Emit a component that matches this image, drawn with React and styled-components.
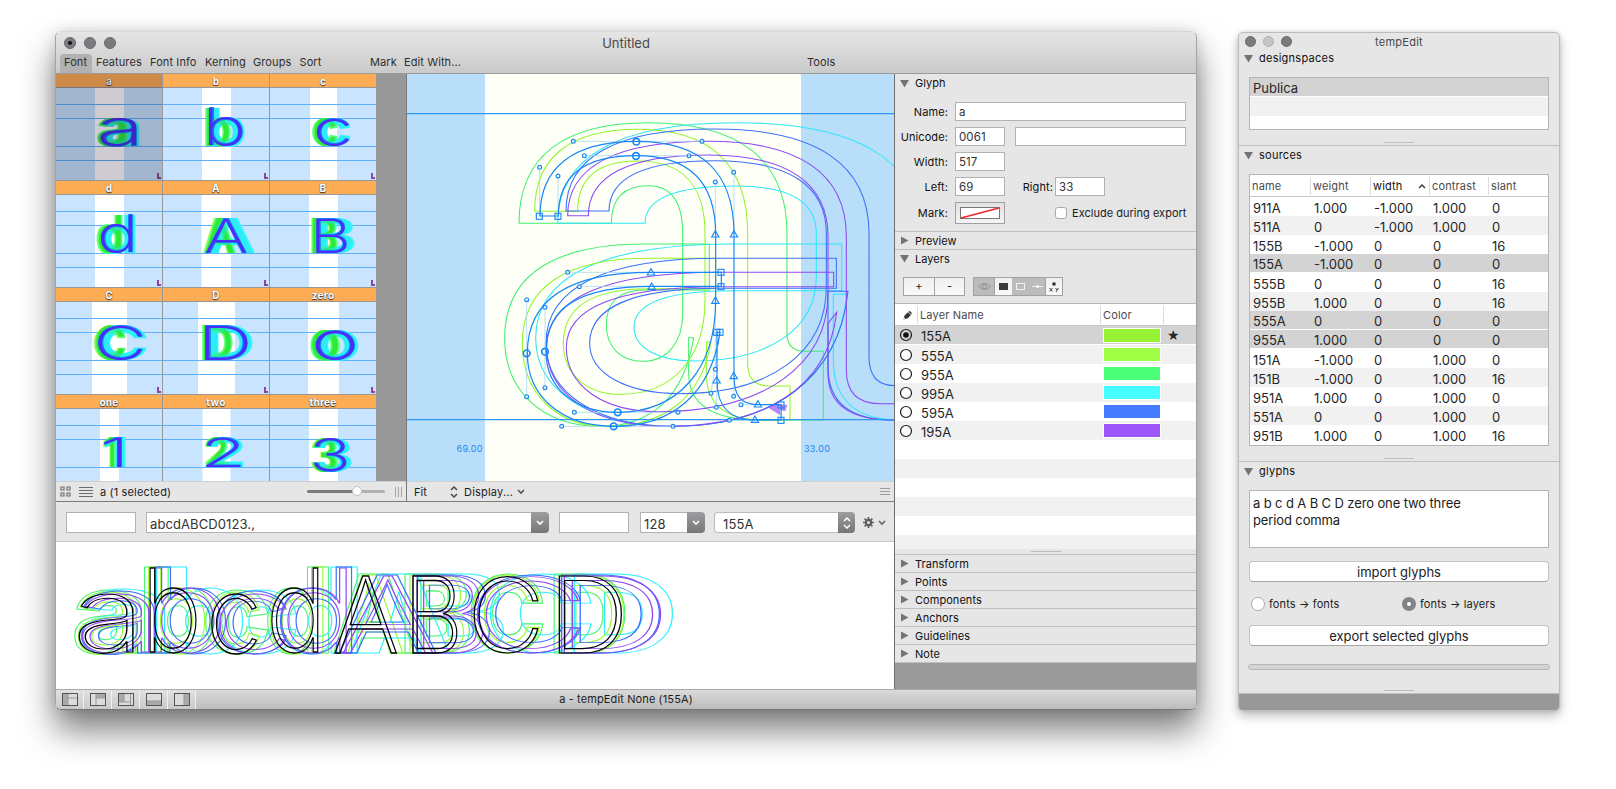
import React from "react";
import styled, { createGlobalStyle, css } from "styled-components";

const Global = createGlobalStyle`
  * { box-sizing: border-box; }
  body { margin: 0; background: #fff; overflow: hidden; }
`;

const Desktop = styled.main`
  position: relative;
  width: 1616px;
  height: 789px;
  overflow: hidden;
  background: #fff;
  color: #1c1c1c;
  font: 11px/14px Inter, "Liberation Sans", sans-serif;
  letter-spacing: 0.1px;
  white-space: nowrap;
  svg { display: block; flex: none; }
`;

/* ---------- windows ---------- */

const MainWindow = styled.section`
  position: absolute;
  left: 55px;
  top: 31px;
  width: 1142px;
  height: 679px;
  border: 1px solid #a3a3a3;
  border-top-color: #d8d8d8;
  border-bottom-color: #777;
  border-radius: 6px;
  box-shadow: 0 20px 34px rgba(0, 0, 0, 0.52), 0 0 14px rgba(0, 0, 0, 0.12);
  overflow: hidden;
  display: flex;
  flex-direction: column;
`;

const ToolWindow = styled.section`
  position: absolute;
  left: 1238px;
  top: 32px;
  width: 322px;
  height: 679px;
  border: 1px solid #bcbcbc;
  border-radius: 5px;
  box-shadow: 0 5px 11px rgba(0, 0, 0, 0.26), 0 0 4px rgba(0, 0, 0, 0.12);
  overflow: hidden;
  display: flex;
  flex-direction: column;
  background: #e6e6e6;
`;

const Header = styled.header`
  height: 42px;
  border-bottom: 1px solid #9b9b9b;
  background: linear-gradient(#e5e5e5, #cacaca);
  display: flex;
  flex-direction: column;
`;

const TitleRow = styled.div`
  height: 22px;
  display: grid;
  grid-template-columns: 100px 1fr 100px;
  align-items: center;
  padding-left: 8px;
  padding-right: 8px;
  color: #484848;
`;

const Title = styled.div`
  text-align: center;
  font-size: ${(p) => (p.$small ? "11px" : "13px")};
  letter-spacing: ${(p) => (p.$small ? "0.25px" : "0")};
  color: #484848;
`;

const Lights = styled.div`
  display: flex;
  gap: ${(p) => p.$gap || 8}px;
`;

const Light = styled.i`
  width: ${(p) => p.$size || 12}px;
  height: ${(p) => p.$size || 12}px;
  border-radius: 50%;
  border: 1px solid ${(p) => (p.$dim ? "#adadad" : "#69696d")};
  background: ${(p) => (p.$dim ? "#c5c5c5" : "#7b7b7f")};
  display: grid;
  place-items: center;
  &::after {
    content: "";
    width: 4px;
    height: 4px;
    border-radius: 50%;
    background: ${(p) => (p.$dot ? "#111" : "transparent")};
  }
`;

const MenuRow = styled.nav`
  height: 19px;
  display: flex;
  padding-left: 4px;
`;

const MenuItem = styled.div`
  width: ${(p) => p.$w}px;
  height: 19px;
  line-height: 17px;
  color: #2e2e2e;
  ${(p) =>
    p.$active &&
    css`
      background: #b1b1b1;
      border-radius: 4px 4px 0 0;
      padding-left: 4px;
      margin-right: 4px;
    `}
`;

const Body = styled.div`
  display: flex;
  height: 615px;
`;

const Workspace = styled.div`
  width: 839px;
  border-right: 1px solid #6f6f6f;
  display: flex;
  flex-direction: column;
`;

const Panes = styled.div`
  display: flex;
  height: 428px;
  border-bottom: 1px solid #7c7c7c;
`;

/* ---------- font overview ---------- */

const FontPane = styled.div`
  width: 351px;
  border-right: 1px solid #777;
  background: #989898;
  display: flex;
  flex-direction: column;
`;

const CellGrid = styled.div`
  width: 320px;
  height: 407px;
  overflow: hidden;
  display: grid;
  grid-template-columns: 107px 107px 106px;
  grid-auto-rows: 107px;
`;

const Cell = styled.div`
  border-right: ${(p) => (p.$last ? 0 : 1)}px solid #979797;
  border-bottom: 1px solid #979797;
  position: relative;
  &::after {
    content: "";
    display: ${(p) => (p.$selected ? "block" : "none")};
    position: absolute;
    inset: 0;
    background: rgba(10, 0, 20, 0.2);
  }
`;

const CellName = styled.div`
  height: 14px;
  border-bottom: 1px solid #979797;
  background: #ffad55;
  color: #fff;
  text-align: center;
  font-size: 10px;
  line-height: 14px;
  font-weight: 700;
  letter-spacing: 0.3px;
  text-shadow: 0 1px 1px #333, 0 0 1px #666;
`;

const PaneBar = styled.div`
  width: 100%;
  height: 20px;
  border-top: 1px solid #cfcfcf;
  background: #e6e6e6;
  display: flex;
  align-items: center;
  padding: 0 ${(p) => p.$end || 4}px 0 ${(p) => p.$pad}px;
`;

const Grow = styled.span`
  flex: 1;
`;

const ListGap = styled.span`
  margin-left: 8px;
`;

const SelectionLabel = styled.span`
  margin-left: 7px;
  letter-spacing: 0.15px;
`;

const Track = styled.div`
  width: 78px;
  height: 3px;
  margin: -1px 10px 0 0;
  border-radius: 2px;
  background: linear-gradient(90deg, #7b7b7b 50px, #b0b0b0 50px);
  display: flex;
  align-items: center;
  padding-left: 45px;
`;

const Knob = styled.i`
  flex: none;
  width: 10px;
  height: 10px;
  border-radius: 50%;
  background: #fff;
  border: 1px solid #c2c2c2;
`;

const EditorPane = styled.div`
  width: 487px;
  display: flex;
  flex-direction: column;
`;

const Zoom = styled.span`
  width: 36px;
`;

const Menu = styled.span`
  margin: 0 4px 0 6px;
  letter-spacing: 0.2px;
`;

/* ---------- preview text ---------- */

const TextBar = styled.div`
  height: 40px;
  padding: 10px 0 0 10px;
  background: #e6e6e6;
  border-bottom: 1px solid #cacaca;
  display: flex;
  align-items: flex-start;
  > * { flex: none; }
`;

const Field = styled.div`
  width: ${(p) => p.$w}px;
  height: ${(p) => p.$h || 19}px;
  margin-right: ${(p) => p.$mr || 0}px;
  padding-left: 3px;
  background: #fff;
  border: 1px solid #b2b2b2;
  ${(p) => p.$joined && "border-right: 0;"}
  ${(p) =>
    p.$round && "border-radius: 4px 0 0 4px; padding-left: 8px; border-color: #bdbdbd;"}
  font-size: ${(p) => (p.$big ? 13 : 11.5)}px;
  line-height: ${(p) => (p.$big ? 22 : 19)}px;
  letter-spacing: 0.1px;
  color: #333;
`;

const DropButton = styled.div`
  width: ${(p) => p.$w || 18}px;
  height: 21px;
  margin-right: ${(p) => p.$mr}px;
  border-radius: 0 4px 4px 0;
  background: linear-gradient(#9d9da0, #767679);
  display: grid;
  place-items: center;
`;

const GearMenu = styled.div`
  height: 21px;
  display: flex;
  align-items: center;
  gap: 4px;
`;

const PreviewPane = styled.div`
  flex: 1;
  background: #fff;
`;

/* ---------- footer ---------- */

const Footer = styled.footer`
  height: 20px;
  border-top: 1px solid #a8a8a8;
  background: linear-gradient(#dadada, #bcbcbc);
  display: grid;
  grid-template-columns: 141px 1fr 141px;
`;

const FooterButtons = styled.div`
  display: flex;
`;

const FooterButton = styled.div`
  width: 28px;
  height: 19px;
  border-right: 1px solid #f1f1f1;
  background: rgba(255, 255, 255, 0.2);
  display: grid;
  place-items: center;
`;

const FooterText = styled.div`
  text-align: center;
  line-height: 18px;
  letter-spacing: 0.12px;
`;

/* ---------- inspector ---------- */

const Inspector = styled.aside`
  width: 301px;
  background: #9a9a9a;
  display: flex;
  flex-direction: column;
`;

const SectionHead = styled.div`
  height: ${(p) => p.$h || 18}px;
  ${(p) => p.$line && "border-bottom: 1px solid #bfbfbf;"}
  background: #e6e6e6;
  display: flex;
  align-items: center;
  gap: 6px;
  padding-left: 5px;
  color: #111;
  letter-spacing: ${(p) => (p.$wide ? 0.25 : 0.05)}px;
`;

const Form = styled.div`
  height: 140px;
  padding-top: 10px;
  background: #e6e6e6;
  border-bottom: 1px solid #bfbfbf;
  display: flex;
  flex-direction: column;
  gap: 6px;
`;

const FormRow = styled.div`
  display: flex;
  align-items: center;
`;

const Label = styled.label`
  width: ${(p) => p.$w || 53}px;
  margin-right: ${(p) => p.$mr || 7}px;
  text-align: right;
  color: #111;
`;

const MarkButton = styled.div`
  width: 50px;
  height: 22px;
  border: 1px solid #a0a0a0;
  background: linear-gradient(#e2e2e2, #f4f4f4);
  display: grid;
  place-items: center;
`;

const Check = styled.i`
  width: 12px;
  height: 12px;
  margin: 0 5px 0 50px;
  background: #fff;
  border: 1px solid #aaa;
  border-radius: 3px;
`;

const ExportText = styled.span`
  letter-spacing: 0.02px;
`;

const LayerTools = styled.div`
  height: 37px;
  padding: 10px 8px 0;
  background: #e6e6e6;
  border-bottom: 1px solid #b9b9b9;
  display: flex;
  gap: 8px;
`;

const Segments = styled.div`
  height: 19px;
  border: 1px solid #a2a2a2;
  display: flex;
`;

const Segment = styled.div`
  width: ${(p) => p.$w}px;
  background: ${(p) => (p.$dark ? "#bcbcbc" : "linear-gradient(#f0f0f0, #f9f9f9)")};
  ${(p) => p.$edge && "border-right: 1px solid #a2a2a2;"}
  display: grid;
  place-items: center;
  line-height: 17px;
`;

const LayerTable = styled.div`
  height: 245px;
  overflow: hidden;
  background: #fff;
`;

const HeadRow = styled.div`
  height: 22px;
  padding-top: 2px;
  border-bottom: 1px solid #c6c6c6;
  display: flex;
  color: #4a4a4a;
  background: #fff;
`;

const HeadCell = styled.div`
  width: ${(p) => p.$w}px;
  height: 18px;
  line-height: 17px;
  padding-left: 2px;
  ${(p) => p.$edge && "border-right: 1px solid #dcdcdc;"}
  display: flex;
  align-items: center;
  justify-content: ${(p) => (p.$spread ? "space-between" : p.$center ? "center" : "flex-start")};
  letter-spacing: 0.15px;
  color: ${(p) => (p.$active ? "#111" : "#4a4a4a")};
`;

const ListRow = styled.div`
  height: 19px;
  display: flex;
  align-items: center;
  background: ${(p) => (p.$selected ? "#d3d3d3" : p.$odd ? "#f1f1f1" : "#fff")};
  ${(p) => p.$selected && "border-bottom: 1px solid #fff;"}
  font-size: 13px;
  line-height: 18px;
  letter-spacing: 0;
  color: #262626;
`;

const LayerName = styled.span`
  width: 182px;
  padding-left: 4px;
  padding-top: 2px;
`;

const SwatchGap = styled.span`
  display: flex;
  padding-left: 4px;
`;

const Swatch = styled.i`
  width: 58px;
  height: 15px;
  border: 1px solid #fff;
  background: ${(p) => p.$c};
`;

const Star = styled.span`
  margin-left: 6px;
  font: 14px/18px "DejaVu Sans", sans-serif;
`;

const Splitter = styled.div`
  height: ${(p) => p.$h}px;
  border-bottom: 1px solid #bfbfbf;
  background: #e6e6e6;
  display: flex;
  justify-content: center;
  align-items: flex-end;
  padding-bottom: 2px;
  &::after {
    content: "";
    width: 30px;
    height: 1px;
    background: #bdbdbd;
  }
`;

/* ---------- tool window ---------- */

const ToolTitle = styled.div`
  height: 17px;
  display: grid;
  grid-template-columns: 70px 1fr 70px;
  align-items: center;
  padding: 0 6px;
`;

const Box = styled.div`
  width: 300px;
  height: ${(p) => p.$h}px;
  margin: ${(p) => p.$mt}px 10px 0;
  border: 1px solid #b5b5b5;
  background: #fff;
  overflow: hidden;
`;

const Value = styled.span`
  width: ${(p) => p.$w}px;
  padding-left: 3px;
  padding-top: 2px;
`;

const GlyphText = styled.div`
  padding: 4px 3px;
  font-size: 13px;
  line-height: 17px;
  letter-spacing: -0.12px;
  white-space: pre-line;
`;

const PushButton = styled.div`
  width: 300px;
  height: 21px;
  margin: ${(p) => p.$mt || 0}px 10px 0;
  border: 1px solid #c4c4c4;
  border-bottom-color: #a5a5a5;
  border-radius: 4px;
  background: #fff;
  text-align: center;
  font-size: 13px;
  line-height: 20px;
  letter-spacing: -0.03px;
`;

const RadioRow = styled.div`
  height: 43px;
  padding-left: 12px;
  display: flex;
  align-items: center;
`;

const Radio = styled.div`
  width: 151px;
  display: flex;
  align-items: center;
  gap: 4px;
  letter-spacing: 0.12px;
`;

const RadioDot = styled.i`
  width: 14px;
  height: 14px;
  border-radius: 50%;
  background: #fff;
  border: ${(p) => (p.$on ? "5px solid #838387" : "1px solid #adadad")};
`;

const Progress = styled.div`
  width: 302px;
  height: 6px;
  margin: 18px 9px 0;
  border: 1px solid #b7b7b7;
  border-radius: 3px;
  background: #d4d4d4;
`;

const Filler = styled.div`
  flex: 1;
  background: #989898;
`;

/* ---------- glyph specimens ---------- */

const pen = document.createElement("canvas").getContext("2d");

/* Places one character so that its ink fills the box x0..x1, y0..y1. */
function Specimen({ ch, weight, x0, x1, y0, y1, strokeWidth, ...rest }) {
  pen.font = `${weight} 100px Inter, sans-serif`;
  const m = pen.measureText(ch);
  const sx = (x1 - x0) / (m.actualBoundingBoxLeft + m.actualBoundingBoxRight);
  const sy = (y1 - y0) / (m.actualBoundingBoxAscent + m.actualBoundingBoxDescent);
  const tx = x0 + m.actualBoundingBoxLeft * sx;
  const ty = y1 - m.actualBoundingBoxDescent * sy;
  return (
    <text
      transform={`translate(${tx} ${ty}) scale(${sx} ${sy})`}
      fontFamily="Inter, sans-serif"
      fontSize="100"
      letterSpacing="0"
      fontWeight={weight}
      strokeWidth={strokeWidth ? (strokeWidth * 2) / (sx + sy) : undefined}
      {...rest}
    >
      {ch}
    </text>
  );
}

/* Horizontal extents are measured from the left edge of the cell. */
const CELLS = [
  { n: "a", ch: "a", band: [39, 68], g: [40.7, 72], c: [43.5, 84], b: [44.5, 81], y: [30, 58.5] },
  { n: "b", ch: "b", band: [39, 68], g: [42, 68], c: [45, 82], b: [46, 80], y: [20, 58.5] },
  { n: "c", ch: "c", band: [40, 67], g: [42, 68], c: [46, 81], b: [46.5, 80], y: [30, 58.5] },
  { n: "d", ch: "d", band: [39, 68], g: [40.5, 67], c: [44, 80], b: [44.5, 77], y: [20, 58.5] },
  { n: "A", ch: "A", band: [38.5, 68], g: [40, 73], c: [42, 92], b: [42, 84], y: [23, 58] },
  { n: "B", ch: "B", band: [39, 68], g: [41, 68], c: [46, 85], b: [46, 77], y: [23, 58] },
  { n: "C", ch: "C", band: [36, 71], g: [38, 70], c: [41, 91], b: [42, 87], y: [23, 58.5] },
  { n: "D", ch: "D", band: [35, 72], g: [39, 70], c: [42, 90], b: [42, 85], y: [23, 58] },
  { n: "zero", ch: "o", band: [38, 69], g: [40, 70], c: [44, 89], b: [45, 85], y: [28, 58.5] },
  { n: "one", ch: "1", band: [44, 63], g: [47, 60], c: [49, 70], b: [48, 66], y: [28, 58] },
  { n: "two", ch: "2", band: [39.5, 67.5], g: [42, 65], c: [44, 81], b: [43, 78], y: [28, 58] },
  { n: "three", ch: "3", band: [39, 68], g: [41, 68], c: [43, 82], b: [44, 77], y: [28, 63] },
];

function CellArt({ cell }) {
  const [y0, y1] = cell.y;
  const [gx0, gx1] = cell.g;
  const [cx0, cx1] = cell.c;
  const [bx0, bx1] = cell.b;
  return (
    <svg width="106" height="92" viewBox="0 0 106 92">
      <rect width="106" height="92" fill="#c9e4ff" />
      <rect x={cell.band[0]} width={cell.band[1] - cell.band[0]} height="92" fill="#fff" />
      {[16, 30, 58, 72].map((y) => (
        <rect key={y} y={y} width="106" height="1" fill="#5fb0fb" />
      ))}
      <Specimen ch={cell.ch} weight={800} x0={cx0} x1={cx1} y0={y0} y1={y1} fill="#38f5ff" />
      <Specimen ch={cell.ch} weight={800} x0={gx0} x1={gx1} y0={y0} y1={y1} fill="#45ff68" fillOpacity="0.85" />
      <Specimen ch={cell.ch} weight={500} x0={gx0 + 2} x1={gx1 - 2} y0={y0} y1={y1} fill="#25e62c" fillOpacity="0.85" />
      <Specimen ch={cell.ch} weight={700} x0={cx0 + 1} x1={cx1 - 2} y0={y0} y1={y1} fill="#20e6ee" fillOpacity="0.5" />
      <Specimen ch={cell.ch} weight={300} x0={bx0} x1={bx1} y0={y0} y1={y1} fill="#1878ff" />
      <Specimen ch={cell.ch} weight={200} x0={bx0} x1={bx1 - 0.5} y0={y0 + 0.5} y1={y1 - 0.5} fill="#4c2cf8" />
      <path d="M101 85h2v4h2v2h-4z" fill="#8d45a5" />
    </svg>
  );
}

/* ---------- string preview ---------- */

const LOW = [343, 523];
const PREVIEW = [
  {
    color: "#46f46d", weight: 900, low: [330, 523], asc: [260, 523], cap: [282, 520],
    x: [[103, 305], [310, 520], [497, 685], [683, 867], [880, 1125], [1093, 1290], [1293, 1510], [1540, 1755]],
  },
  {
    color: "#30f0ff", weight: 900, low: [330, 523], asc: [260, 523], cap: [282, 520],
    x: [[122, 375], [345, 610], [545, 770], [725, 953], [930, 1230], [1140, 1392], [1350, 1655], [1600, 1898]],
  },
  {
    color: "#96fa2c", weight: 500, low: [338, 523], asc: [260, 523], cap: [286, 520],
    x: [[115, 290], [325, 497], [510, 660], [690, 850], [885, 1090], [1110, 1272], [1297, 1500], [1557, 1752]],
  },
  {
    color: "#3d70ff", weight: 500, low: [336, 523], asc: [260, 523], cap: [286, 520],
    x: [[125, 345], [345, 560], [530, 742], [718, 936], [895, 1190], [1120, 1350], [1310, 1625], [1565, 1860]],
  },
  {
    color: "#9148f5", weight: 200, low: LOW, asc: [262, 523], cap: [289, 520],
    x: [[128, 328], [345, 545], [535, 740], [720, 922], [905, 1180], [1130, 1330], [1312, 1620], [1570, 1862]],
  },
  {
    color: "#000", weight: 200, low: LOW, asc: [262, 523], cap: [289, 520],
    x: [[118, 280], [330, 470], [513, 652], [693, 836], [882, 1070], [1117, 1252], [1300, 1496], [1557, 1745]],
  },
];

function StringPreview() {
  return (
    <svg width="838" height="147" viewBox="48 186 2514 441">
      {PREVIEW.map((layer, li) => (
        <g key={li} fill="none" stroke={layer.color}>
          {[..."abcdABCD"].map((ch, i) => {
            const [y0, y1] = "bd".includes(ch) ? layer.asc : i > 3 ? layer.cap : layer.low;
            return (
              <Specimen
                key={ch}
                ch={ch}
                weight={layer.weight}
                x0={layer.x[i][0]}
                x1={layer.x[i][1]}
                y0={y0}
                y1={y1}
                strokeWidth={layer.color === "#000" ? 3.8 : 3.2}
              />
            );
          })}
        </g>
      ))}
    </svg>
  );
}

/* ---------- outline editor ---------- */

const K = 0.66;
const mix = (a, b, t) => a + (b - a) * t;

/* Quarter curve between two extreme points; `first` is the axis it leaves on. */
const arc = (x0, y0, x1, y1, first, k = K) =>
  first === "v"
    ? `C${x0} ${mix(y0, y1, k)} ${mix(x1, x0, k)} ${y1} ${x1} ${y1}`
    : `C${mix(x0, x1, k)} ${y0} ${x1} ${mix(y1, y0, k)} ${x1} ${y1}`;

function contour(o) {
  const byi = o.byi || o.by;
  return [
    `M${o.xo} ${o.ty}`,
    arc(o.xo, o.ty, o.tx, o.top, "v"),
    arc(o.tx, o.top, o.sr, o.ys, "h"),
    `L${o.sr} ${o.fy}`,
    arc(o.sr, o.fy, o.fcx, o.foot, "v"),
    `L${o.fx} ${o.foot}L${o.fx} 1080L${o.fbx} 1080`,
    arc(o.fbx, 1080, o.stub[0], o.fs, "h"),
    `L${o.stub[0]} ${o.stub[2]}L${o.stub[1]} ${o.stub[3] || o.stub[2]}`,
    `C${o.stub[1] - 27} ${mix(o.stub[2], 1099, 0.65)} ${mix(o.bx, o.stub[1], 0.56)} 1099 ${o.bx} 1099`,
    arc(o.bx, 1099, o.bl, o.by, "h", 0.6),
    arc(o.bl, o.by, o.btx, o.bt, "v"),
    `L${o.br} ${o.bt}L${o.br} ${o.bti}L${o.btx} ${o.bti}`,
    arc(o.btx, o.bti, o.bil, byi, "h"),
    arc(o.bil, byi, o.bix, o.bib, "v", 0.6),
    `C${mix(o.bix, o.sl, 0.62)} ${o.bib} ${o.sl} ${mix(o.ys2, o.bib, 0.61)} ${o.sl} ${o.ys2}`,
    `L${o.sl} ${o.ys}`,
    arc(o.sl, o.ys, o.tx, o.ti, "v"),
    arc(o.tx, o.ti, o.xi, o.ty, "h"),
    "Z",
  ].join("");
}

const OUTLINES = [
  {
    c: "#40f070", xo: 357, xi: 634, ty: 490, tx: 745, top: 188, ti: 377, sr: 1161, sl: 848, ys: 520, fy: 820,
    fcx: 1215, foot: 874, fx: 1270, fbx: 1080, fs: 940, stub: [866, 881, 833], bx: 600, bl: 314, by: 835,
    btx: 735, bt: 552, br: 928, bti: 690, bil: 619, byi: 795, bix: 727, bib: 904, ys2: 760,
  },
  {
    c: "#2ee6f8", xo: 473, xi: 735, ty: 490, tx: 1010, top: 188, ti: 378, sr: 1560, sl: 1249, ys: 520, fy: 820,
    fcx: 1620, foot: 874, fx: 1680, fbx: 1500, fs: 900, stub: [1300, 1341, 703], bx: 820, bl: 407, by: 835,
    btx: 1000, bt: 552, br: 1325, bti: 692, bil: 702, byi: 802, bix: 880, bib: 903, ys2: 650,
  },
  {
    c: "#93f52c", xo: 404, xi: 533, ty: 454, tx: 715, top: 208, ti: 303, sr: 1043, sl: 915, ys: 520, fy: 910,
    fcx: 1108, foot: 978, fx: 1170, fbx: 1090, fs: 940, stub: [919, 933, 846], bx: 620, bl: 367, by: 850,
    btx: 745, bt: 595, br: 947, bti: 686, bil: 490, bix: 662, bib: 1003, ys2: 720,
  },
  {
    c: "#3a70fa", xo: 498, xi: 627, ty: 453, tx: 945, top: 207, ti: 302, sr: 1407, sl: 1279, ys: 520, fy: 890,
    fcx: 1486, foot: 977, fx: 1600, fbx: 1480, fs: 920, stub: [1284, 1344, 694], bx: 820, bl: 438, by: 850,
    btx: 960, bt: 595, br: 1309, bti: 685, bil: 569, bix: 840, bib: 1001, ys2: 680,
  },
  {
    c: "#8c48f4", xo: 503, xi: 565, ty: 467, tx: 925, top: 244, ti: 285, sr: 1339, sl: 1284, ys: 530, fy: 930,
    fcx: 1440, foot: 1031, fx: 1600, fbx: 1480, fs: 940, stub: [1284, 1310, 790, 757], bx: 800, bl: 440, by: 862,
    btx: 960, bt: 637, br: 1301, bti: 680, bil: 499, bix: 775, bib: 1055, ys2: 700,
  },
];

const ACTIVE =
  "M420 468C420 322 520 244 709 244C906 244 1002 337 1002 523L1002 948C1002 1009 1023 1034 1074 1034" +
  "L1144 1034L1143 1080L1065 1080C988 1080 951 1042 951 961L951 817L960 817C933 1000 819 1099 641 1099" +
  "C485 1099 382 1010 382 880C382 719 503 637 753 637L964 637L964 679L755 679C538 679 438 742 438 875" +
  "C438 983 523 1057 653 1057C834 1057 947 928 947 722L947 523C947 366 866 287 708 287C553 287 475 348 475 468Z";

const HANDLES =
  "M419 468V322M520 244H906M553 287H867M474 468V348M946 366V523M1002 337V523M503 637H753M538 679H755" +
  "M380 719V1010M435 742V983M523 1057H834M485 1099H819M946 722V928M1002 948V1009M950 961V1042M960 817L933 1000" +
  "M1023 1034H1074M988 1080H1065";

const CONTROL = [
  [520, 244], [906, 244], [419, 322], [474, 348], [553, 287], [867, 287], [946, 366], [1001, 337], [503, 637],
  [538, 680], [380, 719], [435, 742], [380, 1010], [435, 983], [523, 1057], [485, 1099], [834, 1057], [819, 1099],
  [946, 928], [933, 1000], [949, 1042], [1001, 1009], [1023, 1034], [988, 1081],
];
const SMOOTH = [[709, 245], [708, 288], [380, 880], [435, 875], [653, 1057], [641, 1099]];
const CORNER = [[418, 469], [474, 469], [963, 637], [963, 680], [950, 817], [960, 817], [1143, 1035], [1143, 1081]];
const TANGENT = [
  [946, 523], [1002, 523], [753, 637], [755, 680], [946, 722], [950, 961], [1001, 948], [1074, 1033], [1065, 1079],
];

const CanvasLabel = styled.text`
  font: 9px Inter, sans-serif;
  letter-spacing: 0.3px;
  fill: #1888f5;
`;

function OutlineEditor() {
  return (
    <svg width="487" height="407" viewBox="0 0 487 407">
      <rect width="487" height="407" fill="#fefff7" />
      <rect width="78" height="407" fill="#b9defa" />
      <rect x="394" width="93" height="407" fill="#b9defa" />
      <g transform="translate(-7 -14) scale(.33333)" fill="none" strokeWidth="3.2">
        {OUTLINES.map((o) => (
          <path key={o.c} d={contour(o)} stroke={o.c} />
        ))}
        <path d={HANDLES} stroke="#a9d6f5" strokeWidth="2.4" />
        <path d="M0 161H1500M0 1079H1500" stroke="#2f96f6" strokeWidth="4" />
        <path d="M1105 1043L1122 1034H1162L1156 1054L1140 1050V1066Z" fill="#a35cf8" fillOpacity="0.75" />
        <path d={ACTIVE} stroke="#1788f8" strokeWidth="3.6" />
        <g stroke="#1788f8" strokeWidth="3.4">
          {CONTROL.map(([x, y], i) => (
            <circle key={i} cx={x} cy={y} r="5.8" fill="#e8f5fb" fillOpacity="0.7" />
          ))}
          {CORNER.map(([x, y], i) => (
            <rect key={i} x={x - 9} y={y - 9} width="18" height="18" />
          ))}
          {TANGENT.map(([x, y], i) => (
            <path key={i} d={`M${x} ${y - 11}l11 19h-22z`} />
          ))}
          {SMOOTH.map(([x, y], i) => (
            <circle key={i} cx={x} cy={y} r="10" strokeWidth="5" />
          ))}
        </g>
      </g>
      <CanvasLabel x="49.5" y="377.5">69.00</CanvasLabel>
      <CanvasLabel x="397" y="377.5">33.00</CanvasLabel>
    </svg>
  );
}

/* ---------- small icons ---------- */

const Stroke = ({ w, h, d, c = "#555", s = 1.3, fill = "none", children }) => (
  <svg width={w} height={h} viewBox={`0 0 ${w} ${h}`} fill={fill} stroke={c} strokeWidth={s}>
    {d && <path d={d} />}
    {children}
  </svg>
);

const GridIcon = () => (
  <Stroke w={11} h={11} c="#707070" s={1.2} d="M1 1h3v3h-3zM7 1h3v3h-3zM1 7h3v3h-3zM7 7h3v3h-3z" />
);
const ListIcon = () => <Stroke w={14} h={12} c="#6a6a6a" s={1} d="M0 1.5h14M0 4.5h14M0 7.5h14M0 10.5h14" />;
const Grip = () => <Stroke w={8} h={10} c="#a5a5a5" s={1} d="M.5 0v10M3.5 0v10M6.5 0v10" />;
const Lines = () => <Stroke w={10} h={8} c="#9c9c9c" s={1} d="M0 .5h10M0 3.5h10M0 6.5h10" />;
const UpDown = ({ c = "#4a4a4a" }) => <Stroke w={8} h={12} c={c} s={1.5} d="M1 4l3-3 3 3M1 8l3 3 3-3" />;
const Chevron = ({ c = "#555" }) => <Stroke w={8} h={6} c={c} s={1.6} d="M1 1l3 3 3-3" />;
const Caret = ({ open }) => (
  <svg width="9" height="9" viewBox="0 0 9 9" fill="#737373">
    <path d={open ? "M0 1h9L4.500 8.500z" : "M1 .5L8.500 4.500L1 8.500z"} />
  </svg>
);
const Gear = () => (
  <Stroke w={11} h={11} c="#5d5d5d" s={1.7}>
    <circle cx="5.500" cy="5.500" r="2.600" strokeWidth="2.200" />
    <path d="M5.500 0v2M5.500 9v2M0 5.500h2M9 5.500h2M1.600 1.600l1.300 1.300M8.100 8.100l1.300 1.300M1.600 9.400l1.300-1.300M8.100 2.900l1.300-1.300" />
  </Stroke>
);
const LAYOUTS = [
  { f: "M1 1h5v11h-5z", l: "M6 1v11M6 5h9.500" },
  { f: "M6 1h9v4h-9z", l: "M6 1v11M6 5h9.500" },
  { f: "M1 1h5v8h-5z", l: "M6 1v8M1 9h11.500M12.500 1v11" },
  { f: "M1 8h14v4h-14z", l: "M1 8h14" },
  { f: "M10 1h5v11h-5z", l: "M10 1v11" },
];
const LayoutIcon = ({ f, l }) => (
  <svg width="16" height="13" viewBox="0 0 16 13">
    <rect x=".5" y=".5" width="15" height="12" fill="#dcdcdc" />
    <path d={f} fill="#a9a9a9" />
    <path d={l} stroke="#999" fill="none" />
    <rect x=".5" y=".5" width="15" height="12" fill="none" stroke="#555" />
  </svg>
);
const Pencil = () => (
  <svg width="9" height="9" viewBox="0 0 9 9">
    <path d="M.5 8.500L1.600 4.500L4.800 1.200L8 4L4.800 7.300z" fill="#333" />
    <path d="M5.200 .8L7 0L8.800 2L8.300 3.600z" fill="#333" />
    <path d="M.3 8.700l1-2.200l1 1z" fill="#fff" />
  </svg>
);
const RowRadio = ({ on }) => (
  <svg width="22" height="14" viewBox="0 0 22 14">
    <circle cx="11" cy="7" r="5.500" fill={on ? "none" : "#fff"} stroke="#1c1c1c" strokeWidth="1.200" />
    {on && <circle cx="11" cy="7" r="2.800" fill="#111" />}
  </svg>
);

/* ---------- data ---------- */

const MENU = [
  ["Features", 54], ["Font Info", 55], ["Kerning", 48], ["Groups", 46.5], ["Sort", 70.5],
  ["Mark", 34], ["Edit With...", 403], ["Tools", 60],
];

const LAYERS = [
  ["155A", "#98f337"], ["555A", "#9ffd43"], ["955A", "#4cff78"],
  ["995A", "#46fdff"], ["595A", "#457bff"], ["195A", "#9e57f9"],
];

const SOURCES = [
  ["911A", "1.000", "-1.000", "1.000", "0"],
  ["511A", "0", "-1.000", "1.000", "0"],
  ["155B", "-1.000", "0", "0", "16"],
  ["155A", "-1.000", "0", "0", "0"],
  ["555B", "0", "0", "0", "16"],
  ["955B", "1.000", "0", "0", "16"],
  ["555A", "0", "0", "0", "0"],
  ["955A", "1.000", "0", "0", "0"],
  ["151A", "-1.000", "0", "1.000", "0"],
  ["151B", "-1.000", "0", "1.000", "16"],
  ["951A", "1.000", "0", "1.000", "0"],
  ["551A", "0", "0", "1.000", "0"],
  ["951B", "1.000", "0", "1.000", "16"],
];
const SELECTED = ["155A", "555A", "955A"];
const COLUMNS = [61, 60, 59, 59, 55];

/* ---------- assembled parts ---------- */

function FontOverview() {
  return (
    <FontPane>
      <CellGrid>
        {CELLS.map((cell, i) => (
          <Cell key={cell.n} $selected={i === 0} $last={i % 3 === 2}>
            <CellName>{cell.n}</CellName>
            <CellArt cell={cell} />
          </Cell>
        ))}
      </CellGrid>
      <PaneBar $pad={4} $end={3}>
        <GridIcon />
        <ListGap><ListIcon /></ListGap>
        <SelectionLabel>a (1 selected)</SelectionLabel>
        <Grow />
        <Track><Knob /></Track>
        <Grip />
      </PaneBar>
    </FontPane>
  );
}

function Glyph() {
  return (
    <>
      <SectionHead><Caret open />Glyph</SectionHead>
      <Form>
        <FormRow><Label>Name:</Label><Field $w={231}>a</Field></FormRow>
        <FormRow><Label>Unicode:</Label><Field $w={50} $mr={10}>0061</Field><Field $w={171} /></FormRow>
        <FormRow><Label>Width:</Label><Field $w={50}>517</Field></FormRow>
        <FormRow>
          <Label>Left:</Label><Field $w={50}>69</Field>
          <Label $w={48} $mr={2}>Right:</Label><Field $w={50}>33</Field>
        </FormRow>
        <FormRow>
          <Label>Mark:</Label>
          <MarkButton>
            <svg width="40" height="12" viewBox="0 0 40 12">
              <rect x=".5" y=".5" width="39" height="11" fill="#fff" stroke="#777" />
              <path d="M1 11L39 1" stroke="#f5222d" strokeWidth="1.400" />
            </svg>
          </MarkButton>
          <Check />
          <ExportText>Exclude during export</ExportText>
        </FormRow>
      </Form>
    </>
  );
}

function LayerList() {
  return (
    <>
      <SectionHead $h={17}><Caret open />Layers</SectionHead>
      <LayerTools>
        <Segments>
          <Segment $w={31} $edge>+</Segment>
          <Segment $w={29}>-</Segment>
        </Segments>
        <Segments>
          <Segment $w={21} $dark $edge>
            <Stroke w={13} h={9} c="#8f8f8f" s={1}>
              <path d="M1 4.500C4 .5 9 .5 12 4.500C9 8.500 4 8.500 1 4.500z" />
              <circle cx="6.500" cy="4.500" r="2" />
            </Stroke>
          </Segment>
          <Segment $w={17}><svg width="9" height="7"><rect width="9" height="7" fill="#3b3b3b" /></svg></Segment>
          <Segment $w={17} $dark><Stroke w={9} h={7} c="#f4f4f4" s={1} d="M.5 .5h8v6h-8z" /></Segment>
          <Segment $w={17} $dark $edge>
            <Stroke w={11} h={5} c="#f4f4f4" s={1} d="M0 2.500h11M4.500 1.500h2v2h-2z" />
          </Segment>
          <Segment $w={16}>
            <Stroke w={10} h={10} c="#333" s={0.9} d="M.5 6l3 3.500M3.500 6l-3 3.500M6.500 6l1.500 2M9.500 6l-2.500 4">
              <rect x="3.500" y=".5" width="3" height="3" fill="#222" stroke="none" />
            </Stroke>
          </Segment>
        </Segments>
      </LayerTools>
      <LayerTable>
        <HeadRow>
          <HeadCell $w={23} $edge $center><Pencil /></HeadCell>
          <HeadCell $w={183} $edge>Layer Name</HeadCell>
          <HeadCell $w={63} $edge>Color</HeadCell>
        </HeadRow>
        {LAYERS.map(([name, color], i) => (
          <ListRow key={name} $selected={i === 0} $odd={i % 2 === 1}>
            <RowRadio on={i === 0} />
            <LayerName>{name}</LayerName>
            <SwatchGap><Swatch $c={color} /></SwatchGap>
            {i === 0 && <Star>★</Star>}
          </ListRow>
        ))}
        {[0, 1, 2, 3, 4, 5].map((i) => <ListRow key={i} $odd={i % 2 === 1} />)}
      </LayerTable>
      <Splitter $h={6} />
    </>
  );
}

const SortIcon = styled.span`
  margin-right: 3px;
`;
const SortMark = () => <SortIcon><Stroke w={8} h={5} c="#333" s={1.4} d="M1 4l3-3 3 3" /></SortIcon>;

function Sources() {
  return (
    <Box $h={272} $mt={10}>
      <HeadRow>
        <HeadCell $w={61} $edge>name</HeadCell>
        <HeadCell $w={60} $edge>weight</HeadCell>
        <HeadCell $w={59} $edge $spread $active>width<SortMark /></HeadCell>
        <HeadCell $w={59} $edge>contrast</HeadCell>
        <HeadCell $w={55}>slant</HeadCell>
      </HeadRow>
      {SOURCES.map((row, i) => (
        <ListRow key={row[0]} $selected={SELECTED.includes(row[0])} $odd={i % 2 === 1}>
          {row.map((v, c) => <Value key={c} $w={COLUMNS[c]}>{v}</Value>)}
        </ListRow>
      ))}
    </Box>
  );
}

export default function App() {
  return (
    <Desktop>
      <Global />
      <MainWindow>
        <Header>
          <TitleRow>
            <Lights><Light $dot /><Light /><Light /></Lights>
            <Title>Untitled</Title>
          </TitleRow>
          <MenuRow>
            <MenuItem $w={32} $active>Font</MenuItem>
            {MENU.map(([t, w]) => <MenuItem key={t} $w={w}>{t}</MenuItem>)}
          </MenuRow>
        </Header>
        <Body>
          <Workspace>
            <Panes>
              <FontOverview />
              <EditorPane>
                <OutlineEditor />
                <PaneBar $pad={7}>
                  <Zoom>Fit</Zoom>
                  <UpDown /><Menu>Display...</Menu><Chevron />
                  <Grow />
                  <Lines />
                </PaneBar>
              </EditorPane>
            </Panes>
            <TextBar>
              <Field $w={70} $h={21} $mr={10} $big />
              <Field $w={385} $h={21} $big $joined>abcdABCD0123.,</Field>
              <DropButton $mr={10}><Chevron c="#fff" /></DropButton>
              <Field $w={70} $h={21} $mr={11} $big />
              <Field $w={47} $h={21} $big $joined>128</Field>
              <DropButton $mr={9}><Chevron c="#fff" /></DropButton>
              <Field $w={124} $h={21} $big $joined $round>155A</Field>
              <DropButton $w={17} $mr={8}><UpDown c="#fff" /></DropButton>
              <GearMenu><Gear /><Chevron c="#666" /></GearMenu>
            </TextBar>
            <PreviewPane><StringPreview /></PreviewPane>
          </Workspace>
          <Inspector>
            <Glyph />
            <SectionHead $line><Caret />Preview</SectionHead>
            <LayerList />
            {["Transform", "Points", "Components", "Anchors", "Guidelines", "Note"].map((s) => (
              <SectionHead key={s} $line><Caret />{s}</SectionHead>
            ))}
          </Inspector>
        </Body>
        <Footer>
          <FooterButtons>
            {LAYOUTS.map((l) => <FooterButton key={l.f}><LayoutIcon {...l} /></FooterButton>)}
          </FooterButtons>
          <FooterText>a - tempEdit None (155A)</FooterText>
        </Footer>
      </MainWindow>

      <ToolWindow>
        <ToolTitle>
          <Lights $gap={7}><Light $size={11} /><Light $size={11} $dim /><Light $size={11} /></Lights>
          <Title $small>tempEdit</Title>
        </ToolTitle>
        <SectionHead $h={16} $wide><Caret open />designspaces</SectionHead>
        <Box $h={53} $mt={11}>
          <ListRow $selected><Value $w={290}>Publica</Value></ListRow>
          <ListRow $odd />
        </Box>
        <Splitter $h={16} />
        <SectionHead $wide><Caret open />sources</SectionHead>
        <Sources />
        <Splitter $h={16} />
        <SectionHead $wide><Caret open />glyphs</SectionHead>
        <Box $h={58} $mt={10}>
          <GlyphText>{"a b c d A B C D zero one two three\nperiod comma"}</GlyphText>
        </Box>
        <PushButton $mt={13}>import glyphs</PushButton>
        <RadioRow>
          <Radio><RadioDot />fonts → fonts</Radio>
          <Radio><RadioDot $on />fonts → layers</Radio>
        </RadioRow>
        <PushButton>export selected glyphs</PushButton>
        <Progress />
        <Splitter $h={24} />
        <Filler />
      </ToolWindow>
    </Desktop>
  );
}
